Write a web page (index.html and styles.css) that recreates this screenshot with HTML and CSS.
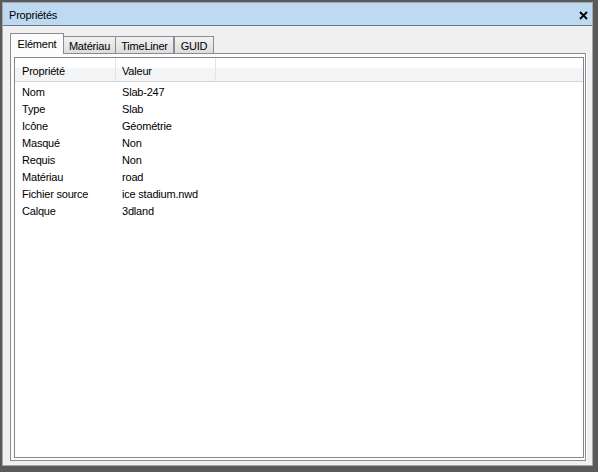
FILE: index.html
```html
<!DOCTYPE html>
<html lang="fr">
<head>
<meta charset="utf-8">
<title>Propriétés</title>
<link rel="stylesheet" href="styles.css">
</head>
<body>
<div class="window">
  <div class="titlebar">
    <span class="title">Propriétés</span>
    <span class="close"><svg width="9" height="9" viewBox="0 0 9 9"><path d="M1 1 L8 8 M8 1 L1 8" stroke="#000" stroke-width="1.8" fill="none"/></svg></span>
  </div>
  <div class="content">
    <div class="tabs">
      <div class="tab active">Elément</div>
      <div class="tab t2">Matériau</div>
      <div class="tab t3">TimeLiner</div>
      <div class="tab t4">GUID</div>
    </div>
    <div class="panel">
      <div class="listview">
        <div class="header">
          <div class="hcol c1">Propriété</div>
          <div class="hcol c2">Valeur</div>
          <div class="hcol c3"></div>
        </div>
        <div class="rows">
          <div class="row"><span class="k">Nom</span><span class="v">Slab-247</span></div>
          <div class="row"><span class="k">Type</span><span class="v">Slab</span></div>
          <div class="row"><span class="k">Icône</span><span class="v">Géométrie</span></div>
          <div class="row"><span class="k">Masqué</span><span class="v">Non</span></div>
          <div class="row"><span class="k">Requis</span><span class="v">Non</span></div>
          <div class="row"><span class="k">Matériau</span><span class="v">road</span></div>
          <div class="row"><span class="k">Fichier source</span><span class="v">ice stadium.nwd</span></div>
          <div class="row"><span class="k">Calque</span><span class="v">3dland</span></div>
        </div>
      </div>
    </div>
  </div>
</div>
</body>
</html>
```
FILE: styles.css
```css
* { box-sizing: border-box; }
html, body { margin: 0; }
body {
  width: 598px;
  height: 472px;
  padding: 2px 5px 6px 2px;
  background: #5a5a5a;
  font-family: "Liberation Sans", Arial, sans-serif;
  font-size: 11px;
  letter-spacing: -0.2px;
  color: #000;
  overflow: hidden;
}
.window {
  height: 100%;
  border: 1px solid #a6a6a6;
  background: #f0f0f0;
  display: flex;
  flex-direction: column;
}
.titlebar {
  height: 23px;
  flex: none;
  background: #bed9f2;
  border-bottom: 1px solid #66788a;
  display: flex;
  align-items: flex-start;
  justify-content: space-between;
  padding: 2px 4px 0 6px;
  line-height: 20px;
}
.title { font-size: 11px; }
.close { display: flex; padding-top: 6px; }
.content {
  flex: 1;
  display: flex;
  flex-direction: column;
  padding: 7px 6px 4px 7px;
  min-height: 0;
}
.tabs {
  height: 20px;
  flex: none;
  display: flex;
  align-items: flex-end;
  position: relative;
  z-index: 1;
}
.tab {
  height: 17px;
  border: 1px solid #898c95;
  border-bottom: none;
  background: linear-gradient(#f3f3f3, #dcdcdc);
  text-align: center;
  line-height: 16px;
  padding-top: 1px;
}
.tab.active {
  height: 21px;
  width: 54px;
  margin-bottom: -1px;
  background: #fcfcfc;
  line-height: 16px;
  padding-top: 2px;
}
.t2 { width: 53px; margin-left: -1px; }
.t3 { width: 59px; margin-left: -1px; }
.t4 { width: 40px; margin-left: 0; }
.panel {
  flex: 1;
  border: 1px solid #898c95;
  background: #fcfcfc;
  padding: 3px 1px 2px 3px;
  display: flex;
  box-shadow: 1px 0 0 #ffffff;
}
.listview {
  flex: 1;
  border: 1px solid #828790;
  background: #fff;
  display: flex;
  flex-direction: column;
}
.header {
  height: 24px;
  flex: none;
  display: flex;
  background: linear-gradient(#ffffff 0%, #ffffff 40%, #f4f5f7 45%, #f3f4f6 100%);
  border-bottom: 1px solid #d5d5d5;
}
.hcol {
  padding-top: 3px;
  line-height: 20px;
  border-right: 1px solid #e3e4e6;
}
.c1 { width: 101px; padding-left: 7px; }
.c2 { width: 100px; padding-left: 6px; }
.c3 { flex: 1; border-right: none; }
.rows { padding-top: 2px; }
.row {
  height: 17px;
  line-height: 17px;
  display: flex;
}
.k { width: 101px; padding-left: 7px; }
.v { padding-left: 6px; }
```
